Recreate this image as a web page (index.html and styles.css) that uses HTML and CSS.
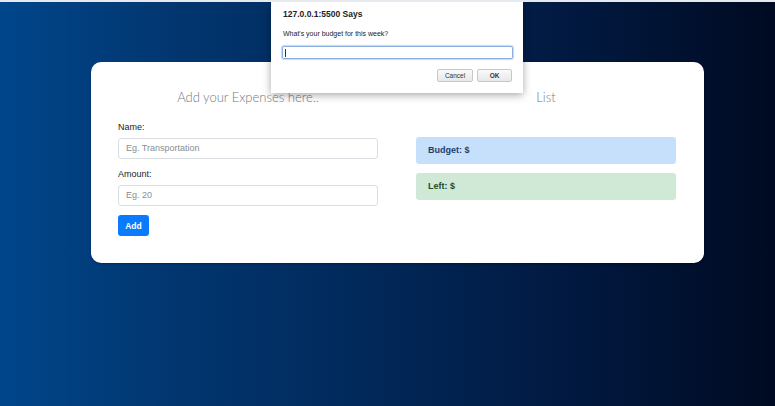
FILE: index.html
```html
<!DOCTYPE html>
<html>
<head>
<meta charset="utf-8">
<link rel="stylesheet" href="styles.css">
</head>
<body>
<div class="page">
  <div class="card">
    <div class="col">
      <h2 class="heading">Add your Expenses here..</h2>
      <label class="label">Name:</label>
      <div class="input">Eg. Transportation</div>
      <label class="label">Amount:</label>
      <div class="input">Eg. 20</div>
      <button class="btn">Add</button>
    </div>
    <div class="col">
      <h2 class="heading">List</h2>
      <div class="alert alert-blue">Budget: $</div>
      <div class="alert alert-green">Left: $</div>
    </div>
  </div>
</div>
<div class="dialog">
  <div class="dlg-title">127.0.0.1:5500 Says</div>
  <div class="dlg-msg">What's your budget for this week?</div>
  <div class="dlg-input"><span class="caret"></span></div>
  <div class="dlg-buttons">
    <button class="dlg-btn cancel">Cancel</button>
    <button class="dlg-btn ok">OK</button>
  </div>
</div>
</body>
</html>
```
FILE: styles.css
```css
html, body {
  margin: 0;
  height: 100%;
}
body {
  width: 775px;
  height: 406px;
  overflow: hidden;
  position: relative;
  box-sizing: border-box;
  border-top: 2px solid #e6e9ee;
  background: linear-gradient(to right, #00468b 0%, #023670 22%, #012a5c 45%, #011a42 72%, #000a22 100%);
  font-family: "Liberation Sans", Arial, sans-serif;
}
.page {
  padding-top: 60px;
  padding-left: 91px;
}
.card {
  width: 613px;
  height: 201px;
  box-sizing: border-box;
  background: #fff;
  border-radius: 10px;
  padding: 27px 28px 0 27px;
  display: grid;
  grid-template-columns: 260px 260px;
  column-gap: 38px;
  box-shadow: 0 1px 2px rgba(0,0,0,0.3);
}
.col {
  display: flex;
  flex-direction: column;
  align-items: stretch;
}
.heading {
  margin: 0;
  font-family: "Lato", "Open Sans", sans-serif;
  font-weight: 300;
  font-size: 13px;
  line-height: 16px;
  color: #737a84;
  text-align: center;
}
.label {
  margin-top: 16px;
  font-size: 9px;
  line-height: 12px;
  color: #212529;
}
.input + .label {
  margin-top: 9px;
}
.label + .input {
  margin-top: 5px;
}
.input {
  height: 21px;
  box-sizing: border-box;
  border: 1px solid #dadde1;
  border-radius: 3px;
  padding-left: 7px;
  font-size: 9px;
  line-height: 19px;
  color: #868e96;
}
.btn {
  align-self: flex-start;
  margin-top: 9px;
  width: 31px;
  height: 21px;
  padding: 0;
  border: none;
  border-radius: 3px;
  background: #0a7bff;
  color: #fff;
  font-family: "Liberation Sans", Arial, sans-serif;
  font-size: 8.5px;
  font-weight: bold;
}
.alert {
  height: 27px;
  box-sizing: border-box;
  border-radius: 3px;
  padding-left: 12px;
  font-size: 9px;
  font-weight: bold;
  line-height: 27px;
}
.alert-blue {
  margin-top: 32px;
  background: #c6e0fb;
  color: #1e3f6e;
}
.alert-green {
  margin-top: 9px;
  background: #cfe9d6;
  color: #1f4a2a;
}
.dialog {
  position: absolute;
  left: 271px;
  top: 0;
  width: 252px;
  height: 91px;
  box-sizing: border-box;
  background: #fff;
  padding: 7px 10px 0 11px;
  box-shadow: 0 2px 8px rgba(0,0,0,0.35);
  display: flex;
  flex-direction: column;
}
.dlg-title {
  font-size: 8.5px;
  line-height: 11px;
  font-weight: 600;
  color: #222;
  padding-left: 1px;
}
.dlg-msg {
  margin-top: 9px;
  font-size: 7px;
  line-height: 9px;
  color: #222;
  padding-left: 1px;
}
.dlg-input {
  margin-top: 8px;
  height: 13px;
  box-sizing: border-box;
  border: 1px solid #89aee0;
  border-radius: 2px;
  box-shadow: 0 0 1px 1px #c5d8f1;
  display: flex;
  align-items: center;
  padding-left: 2px;
}
.caret {
  width: 1px;
  height: 8px;
  background: #333;
}
.dlg-buttons {
  margin-top: 10px;
  display: flex;
  justify-content: flex-end;
  gap: 4px;
  padding-right: 1px;
}
.dlg-btn {
  height: 13px;
  padding: 0;
  border: 1px solid #c8c8c8;
  border-radius: 2px;
  background: linear-gradient(#fafafa, #e8e8e8);
  font-family: "Liberation Sans", Arial, sans-serif;
  font-size: 6.5px;
  color: #333;
}
.cancel { width: 36px; }
.ok { width: 35px; font-weight: bold; }
```
